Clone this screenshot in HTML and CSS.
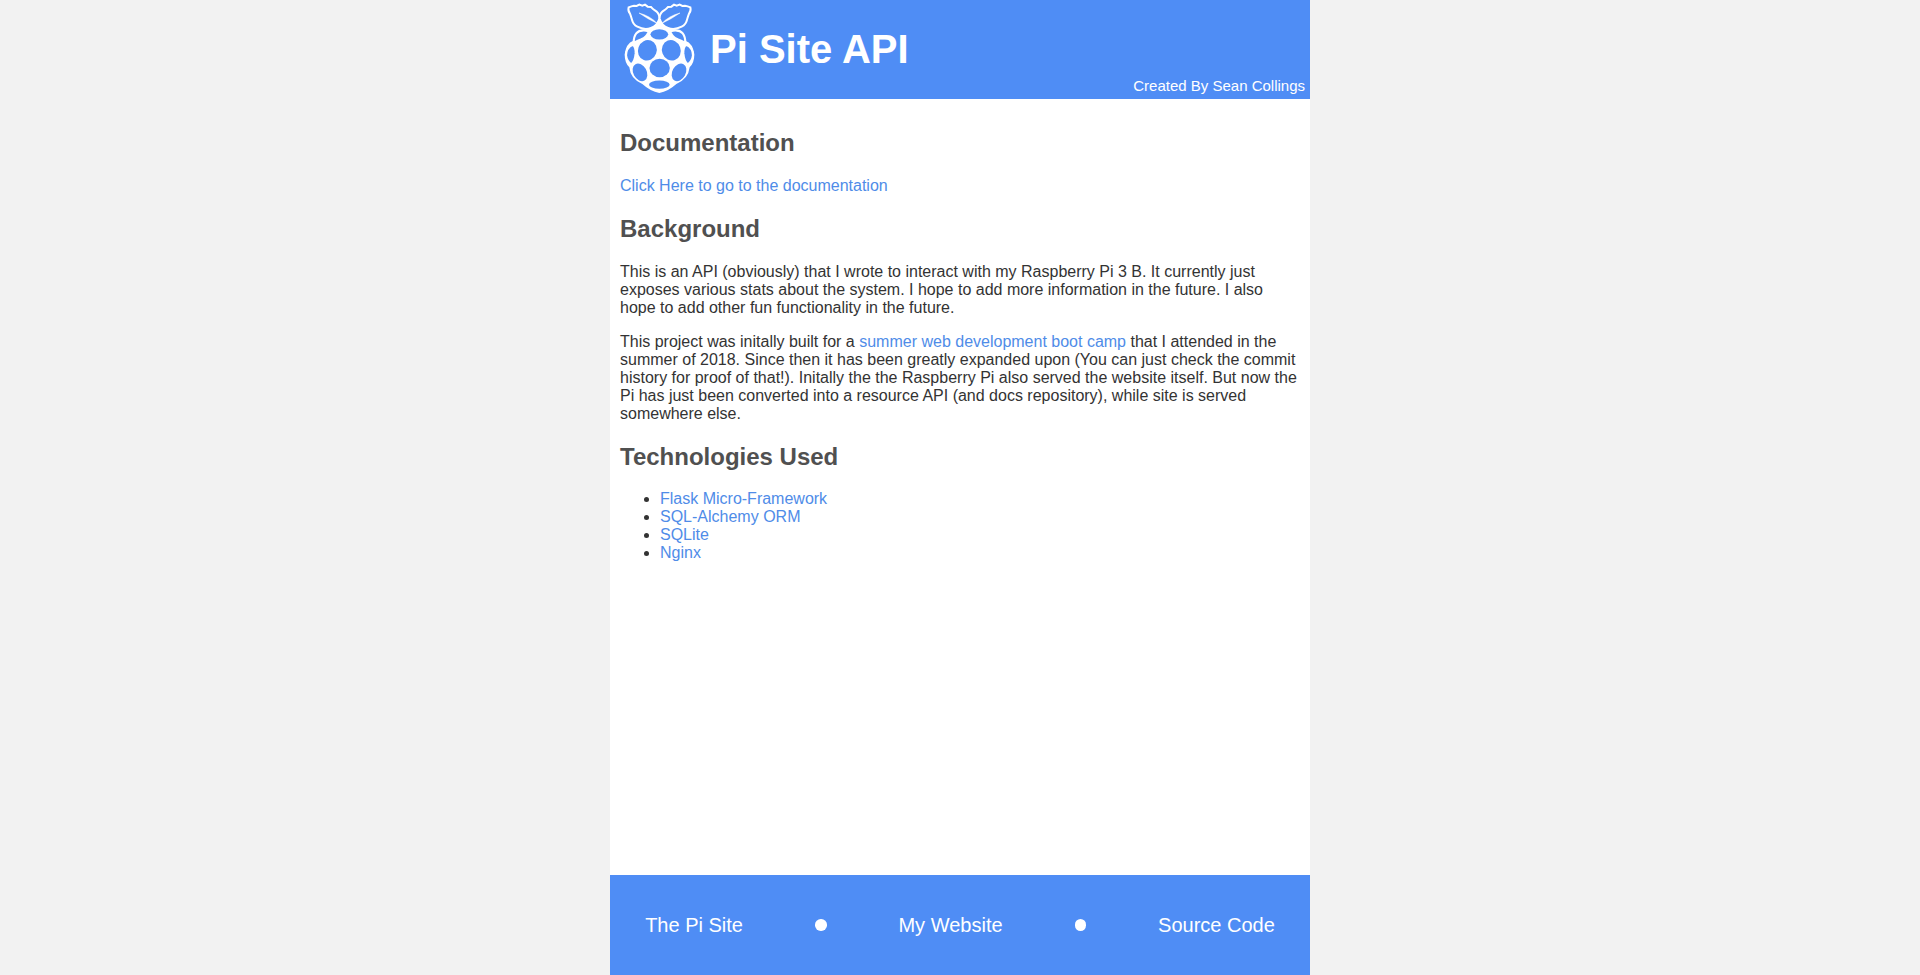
FILE: index.html
```html
<!DOCTYPE html>
<html lang="en">
<head>
<meta charset="utf-8">
<title>Pi Site API</title>
<link rel="stylesheet" href="styles.css">
</head>
<body>
<div class="page">
  <header class="header">
    <svg class="logo" viewBox="30 0 300 297" aria-hidden="true">
      <path class="body" d="M178 60 Q185 82 207 87 Q248 84 256 122 Q279 130 283 163 Q283 189 269 202 Q265 237 229 252 Q205 274 178 279 Q151 274 127 252 Q91 237 88 202 Q74 189 74 163 Q78 130 100 122 Q108 84 149 87 Q172 82 178 60Z"/>
      <g class="leaf">
        <path d="M86 22 L94 19 L102 17 L110 18 L118 14 L127 17 L135 14 L143 20 L153 21 L160 28 L169 34 Q179 43 178 56 Q172 77 153 84 Q133 91 112 80 Q99 73 96 59 Q93 49 90 41 Q83 33 86 22Z"/>
        <path d="M271 22 L263 19 L255 17 L247 18 L239 14 L230 17 L222 14 L214 20 L204 21 L197 28 L188 34 Q178 43 179 56 Q185 77 204 84 Q224 91 245 80 Q258 73 261 59 Q264 49 267 41 Q274 33 271 22Z"/>
      </g>
      <path class="body" d="M178 50 Q182 72 206 88 L150 88 Q174 72 178 50Z"/>
      <path class="vein" d="M117 39 Q151 48 171 70 Q143 57 117 39ZM240 39 Q206 48 186 70 Q214 57 240 39Z"/>
      <g class="outer">
        <path d="M101 129 Q101 90 132 91 Q146 92 145 97 Q140 112 124 118 Q112 122 101 129Z"/>
        <path d="M256 129 Q256 90 225 91 Q211 92 212 97 Q217 112 233 118 Q245 122 256 129Z"/>
        <path d="M98 134 Q78 143 78 166 Q80 184 94 193 Q105 184 107 161 Q108 139 98 134Z"/>
        <path d="M259 134 Q279 143 279 166 Q277 184 263 193 Q252 184 250 161 Q249 139 259 134Z"/>
      </g>
      <g class="drupelets">
        <ellipse cx="178" cy="103" rx="26.500" ry="15.500"/>
        <ellipse cx="142" cy="151" rx="28" ry="31" transform="rotate(20 142 151)"/>
        <ellipse cx="214" cy="151" rx="28" ry="31" transform="rotate(-20 214 151)"/>
        <ellipse cx="179" cy="204" rx="30.500" ry="27.500"/>
        <ellipse cx="120" cy="217" rx="20" ry="28" transform="rotate(-29 120 217)"/>
        <ellipse cx="237" cy="217" rx="20" ry="28" transform="rotate(29 237 217)"/>
        <ellipse cx="178" cy="254" rx="31" ry="12.500"/>
      </g>
    </svg>
    <h1 class="title">Pi Site API</h1>
    <span class="author">Created By Sean Collings</span>
  </header>
  <main class="content">
    <h2>Documentation</h2>
    <p><a href="#">Click Here to go to the documentation</a></p>
    <h2>Background</h2>
    <p>This is an API (obviously) that I wrote to interact with my Raspberry Pi 3 B. It currently just exposes various stats about the system. I hope to add more information in the future. I also hope to add other fun functionality in the future.</p>
    <p>This project was initally built for a <a href="#">summer web development boot camp</a> that I attended in the summer of 2018. Since then it has been greatly expanded upon (You can just check the commit history for proof of that!). Initally the the Raspberry Pi also served the website itself. But now the Pi has just been converted into a resource API (and docs repository), while site is served somewhere else.</p>
    <h2>Technologies Used</h2>
    <ul>
      <li><a href="#">Flask Micro-Framework</a></li>
      <li><a href="#">SQL-Alchemy ORM</a></li>
      <li><a href="#">SQLite</a></li>
      <li><a href="#">Nginx</a></li>
    </ul>
  </main>
  <footer class="footer">
    <a href="#">The Pi Site</a>
    <span class="dot"></span>
    <a href="#">My Website</a>
    <span class="dot"></span>
    <a href="#">Source Code</a>
  </footer>
</div>
</body>
</html>
```
FILE: styles.css
```css
body {
  margin: 0;
  background: #f2f2f2;
  color: #333;
  font-family: "Liberation Sans", Arial, sans-serif;
  font-size: 16px;
}

a {
  color: #4f8ce8;
  text-decoration: none;
}

.page {
  display: flex;
  flex-direction: column;
  width: 700px;
  height: 975px;
  margin: 0 auto;
  background: #fff;
}

.header {
  display: flex;
  flex: none;
  align-items: center;
  height: 99px;
  background: #4f8df5;
  color: #fff;
}

.logo {
  width: 100px;
  height: 99px;
}

.logo .body,
.logo .vein {
  fill: #fff;
}

.logo .vein {
  stroke: #fff;
  stroke-width: 1.5;
}

.logo .leaf path {
  fill: #4f8df5;
  stroke: #fff;
  stroke-width: 6;
}

.logo .outer path {
  fill: #4f8df5;
  stroke: #fff;
  stroke-width: 6.5;
}

.logo .drupelets {
  fill: #4f8df5;
}

.title {
  margin: 0;
  font-size: 40px;
}

.author {
  align-self: flex-end;
  margin-left: auto;
  padding: 0 5px 5px 0;
  font-size: 15px;
}

.content {
  flex: 1;
  padding: 10px;
}

.content h2 {
  margin: 0.83em 0;
  color: #505050;
  font-size: 24px;
}

.content p,
.content ul {
  margin: 16px 0;
}

.footer {
  display: flex;
  flex: none;
  align-items: center;
  justify-content: space-around;
  height: 100px;
  background: #4f8df5;
  font-size: 20px;
}

.footer a {
  color: #fff;
}

.dot {
  width: 11.5px;
  height: 11.5px;
  margin: 0 1.5px 0 2px;
  border-radius: 50%;
  background: #fff;
}
```
